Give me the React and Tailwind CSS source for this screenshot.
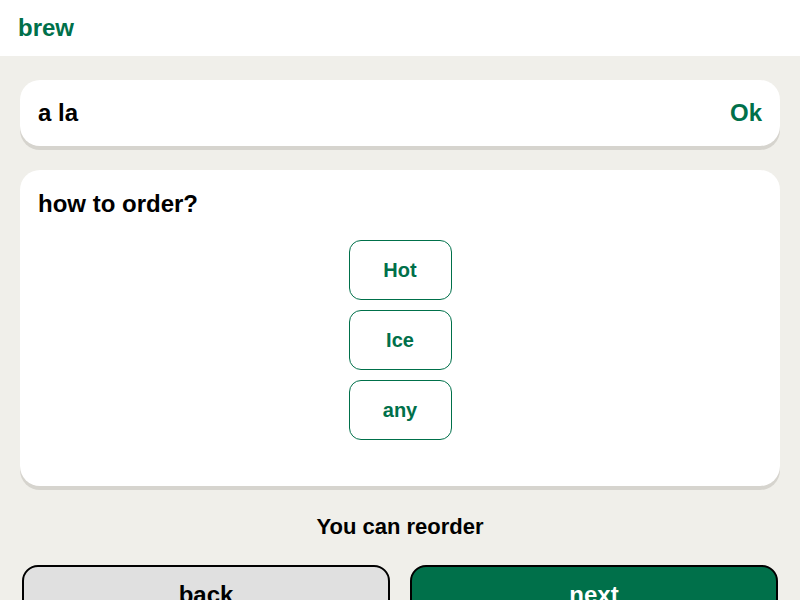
import React, { useState } from 'react'

const options = ['Hot', 'Ice', 'any']

const App = () => {
  const [picked, setPicked] = useState(null)

  return (
    <div className="min-h-[600px] bg-[#f0efea] font-['Liberation_Sans',sans-serif] text-black">
      {/* Top bar */}
      <div className="flex h-14 items-center bg-white px-[18px]">
        <h1 className="text-2xl font-bold text-[#00704a]">brew</h1>
      </div>

      <div className="px-5 pt-6">
        {/* Order strip */}
        <div className="flex h-[66px] items-center justify-between rounded-[20px] bg-white px-[18px] shadow-[0_4px_0_#d6d4ce]">
          <span className="text-2xl font-bold">a la</span>
          <span className="text-2xl font-bold text-[#00704a]">Ok</span>
        </div>

        {/* Question card */}
        <div className="mt-6 h-[316px] rounded-[20px] bg-white px-[18px] pt-[18px] shadow-[0_4px_0_#d6d4ce]">
          <h2 className="text-2xl font-bold">how to order?</h2>
          <div className="mt-5 flex flex-col items-center gap-[10px]">
            {options.map((opt, i) => (
              <button
                key={opt}
                onClick={() => setPicked(i)}
                className={`flex h-[60px] w-[103px] items-center justify-center rounded-xl border border-[#00704a] text-xl font-bold text-[#00704a] ${picked === i ? 'bg-[#e6f1ec]' : 'bg-white'}`}
              >
                {opt}
              </button>
            ))}
          </div>
        </div>

        <p className="mt-6 text-center text-[22px] font-bold">You can reorder</p>
      </div>

      {/* Actions */}
      <div className="mt-[22px] grid grid-cols-2 gap-5 px-[22px]">
        <button className="h-[60px] rounded-2xl border-2 border-black bg-[#e0e0e0] text-2xl font-bold">back</button>
        <button className="h-[60px] rounded-2xl border-2 border-black bg-[#00704a] text-2xl font-bold text-white">next</button>
      </div>
    </div>
  )
}

export default App
